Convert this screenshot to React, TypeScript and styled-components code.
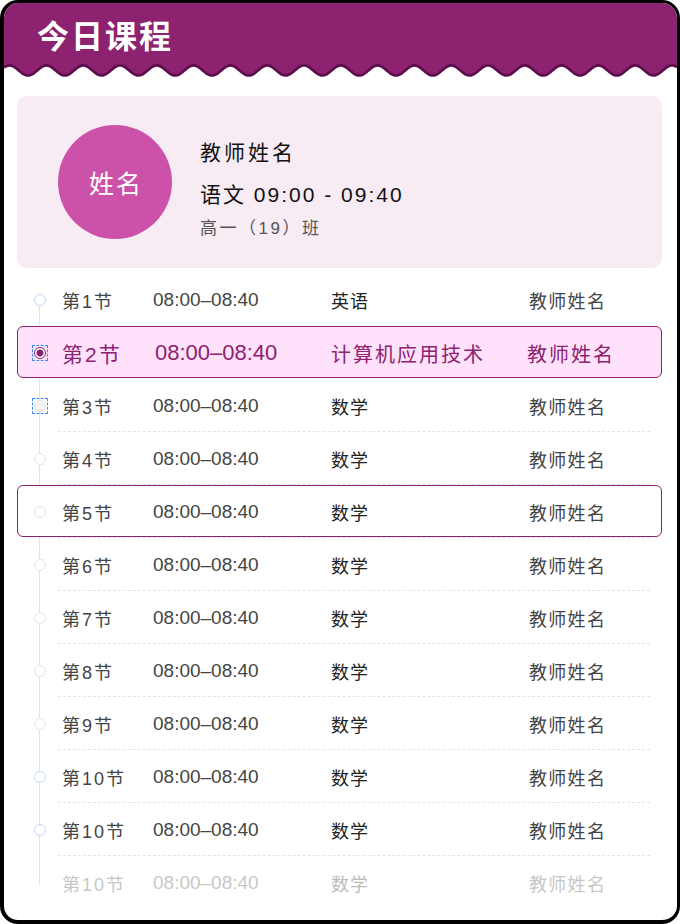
import React from "react";
import styled, { createGlobalStyle } from "styled-components";

const GlobalStyle = createGlobalStyle`
  html, body { margin: 0; padding: 0; background: #fff; overflow: hidden; }
  * { box-sizing: border-box; }
  body { font-family: "Liberation Sans", "Noto Sans CJK SC", sans-serif; }
`;

const PURPLE = "#8c2270";
const DARK = "#5a0c4b";

const Frame = styled.div`
  width: 680px;
  height: 924px;
  border: 3px solid #000;
  border-left-width: 4px;
  border-bottom-width: 4px;
  border-radius: 18px;
  overflow: hidden;
  background: #fff;
  display: flex;
  flex-direction: column;
`;

const Header = styled.header`
  height: 59px;
  background: ${PURPLE};
  display: flex;
  align-items: center;
  padding-left: 33px;
`;

const Title = styled.h1`
  margin: 0;
  color: #fff;
  font-family: "Noto Sans CJK SC", sans-serif;
  font-weight: 700;
  font-size: 32px;
  letter-spacing: 2px;
  line-height: 1;
  padding-top: 2px;
`;

const WaveSvg = styled.svg`
  display: block;
  width: 673px;
  height: 18px;
`;

const Content = styled.main`
  padding: 16px 15px 0 13px;
  flex: 1;
`;

const TeacherCard = styled.section`
  height: 172px;
  background: #f7ebf4;
  border-radius: 10px;
  display: flex;
  align-items: center;
  padding-left: 41px;
  gap: 28px;
`;

const Avatar = styled.div`
  width: 114px;
  height: 114px;
  border-radius: 50%;
  background: #cc52a9;
  color: #fff;
  display: flex;
  align-items: center;
  justify-content: center;
  font-family: "Noto Sans CJK SC", sans-serif;
  font-size: 25px;
  letter-spacing: 2px;
  padding-left: 2px;
`;

const Info = styled.div`
  display: flex;
  flex-direction: column;
  margin-top: 14px;
`;

const Name = styled.div`
  font-family: "Noto Sans CJK SC", sans-serif;
  font-size: 21px;
  line-height: 28px;
  letter-spacing: 3px;
  color: #111;
`;

const Lesson = styled.div`
  margin-top: 16px;
  font-family: "Liberation Sans", "Noto Sans CJK SC", sans-serif;
  font-size: 21px;
  line-height: 28px;
  letter-spacing: 2px;
  color: #111;
`;

const ClassName = styled.div`
  margin-top: 8px;
  font-family: "Liberation Sans", "Noto Sans CJK SC", sans-serif;
  font-size: 17px;
  line-height: 24px;
  letter-spacing: 2.5px;
  color: #555;
`;

const List = styled.div`
  position: relative;
  margin-top: 5px;
`;

const TimelineLine = styled.div`
  position: absolute;
  left: 22px;
  top: 29px;
  bottom: 23px;
  width: 1px;
  background: #e3e3e3;
`;

type RowMode = "plain" | "active" | "outlined";

const Row = styled.div<{ $mode: RowMode; $line: boolean; $faded?: boolean }>`
  position: relative;
  z-index: 1;
  height: 52px;
  margin-bottom: 1px;
  display: grid;
  grid-template-columns: 30px 91px 178px 196px 1fr;
  align-items: center;
  padding: 2px 0 0 14px;
  border: 1px solid ${(p) => (p.$mode === "plain" ? "transparent" : PURPLE)};
  border-radius: 6px;
  background: ${(p) =>
    p.$mode === "active" ? "#ffe1fb" : p.$mode === "outlined" ? "#fff" : "transparent"};
  color: ${(p) => (p.$mode === "active" ? PURPLE : "#444")};
  &::after {
    content: "";
    display: ${(p) => (p.$line ? "block" : "none")};
    position: absolute;
    left: 40px;
    right: 11px;
    bottom: -2px;
    border-top: 1px dashed #e4e4e4;
  }
  & > span:not(:first-child) {
    opacity: ${(p) => (p.$faded ? 0.3 : 1)};
  }
`;

type DotKind = "blue" | "gray" | "active" | "focus";

const DotSlot = styled.span<{ $focus: boolean }>`
  display: flex;
  align-items: center;
  justify-content: center;
  width: 16px;
  height: 16px;
  border: 1px dashed ${(p) => (p.$focus ? "#3d8ff3" : "transparent")};
`;

const Dot = styled.span<{ $kind: DotKind }>`
  display: block;
  flex: none;
  width: 12px;
  height: 12px;
  border-radius: 50%;
  border: ${(p) =>
    p.$kind === "active"
      ? `1.5px solid ${PURPLE}`
      : p.$kind === "blue"
      ? "1px solid #c5d9f6"
      : "1px solid #e4e4e4"};
  background: ${(p) =>
    p.$kind === "active"
      ? `radial-gradient(circle, ${PURPLE} 0 3.2px, #fff 3.8px)`
      : p.$kind === "focus"
      ? "#f3f3f3"
      : "#fff"};
`;

const Index = styled.span<{ $big: boolean }>`
  font-family: "Liberation Sans", "Noto Sans CJK SC", sans-serif;
  font-size: ${(p) => (p.$big ? 21 : 18)}px;
  letter-spacing: 2px;
  white-space: nowrap;
`;

const Time = styled.span<{ $big: boolean }>`
  font-family: "Liberation Sans", sans-serif;
  font-size: ${(p) => (p.$big ? 22 : 19)}px;
  white-space: nowrap;
  padding-left: ${(p) => (p.$big ? 2 : 0)}px;
`;

const Subject = styled.span<{ $big: boolean }>`
  font-family: "Noto Sans CJK SC", sans-serif;
  font-size: ${(p) => (p.$big ? 20 : 18)}px;
  letter-spacing: ${(p) => (p.$big ? 2 : 1)}px;
  color: ${(p) => (p.$big ? "inherit" : "#222")};
  white-space: nowrap;
`;

const Teacher = styled.span<{ $big: boolean }>`
  font-family: "Noto Sans CJK SC", sans-serif;
  font-size: ${(p) => (p.$big ? 20 : 18)}px;
  letter-spacing: ${(p) => (p.$big ? 2 : 1.3)}px;
  white-space: nowrap;
  padding-left: ${(p) => (p.$big ? 0 : 2)}px;
`;

type Lesson = {
  idx: string;
  subject: string;
  mode: RowMode;
  dot: DotKind;
  line: boolean;
  faded?: boolean;
};

const lessons: Lesson[] = [
  { idx: "第1节", subject: "英语", mode: "plain", dot: "blue", line: false },
  { idx: "第2节", subject: "计算机应用技术", mode: "active", dot: "active", line: false },
  { idx: "第3节", subject: "数学", mode: "plain", dot: "focus", line: true },
  { idx: "第4节", subject: "数学", mode: "plain", dot: "gray", line: true },
  { idx: "第5节", subject: "数学", mode: "outlined", dot: "gray", line: true },
  { idx: "第6节", subject: "数学", mode: "plain", dot: "gray", line: true },
  { idx: "第7节", subject: "数学", mode: "plain", dot: "gray", line: true },
  { idx: "第8节", subject: "数学", mode: "plain", dot: "gray", line: true },
  { idx: "第9节", subject: "数学", mode: "plain", dot: "gray", line: true },
  { idx: "第10节", subject: "数学", mode: "plain", dot: "blue", line: true },
  { idx: "第10节", subject: "数学", mode: "plain", dot: "blue", line: true },
  { idx: "第10节", subject: "数学", mode: "plain", dot: "blue", line: false, faded: true },
];

function Wave() {
  const W = 673;
  const pts: string[] = [];
  for (let x = 0; x <= W; x += 1) {
    const y = 8.5 + 5 * Math.cos((2 * Math.PI * (x - 24)) / 36.8);
    pts.push(`${x},${y.toFixed(2)}`);
  }
  return (
    <WaveSvg viewBox={`0 0 ${W} 18`} preserveAspectRatio="none">
      <path d={`M0,0 L${pts.join(" L")} L${W},0 Z`} fill={PURPLE} />
      <path d={"M" + pts.join(" L")} fill="none" stroke={DARK} strokeWidth={2.6} />
    </WaveSvg>
  );
}

export default function App() {
  return (
    <>
      <GlobalStyle />
      <Frame>
        <Header>
          <Title>今日课程</Title>
        </Header>
        <Wave />
        <Content>
          <TeacherCard>
            <Avatar>姓名</Avatar>
            <Info>
              <Name>教师姓名</Name>
              <Lesson>语文 09:00 - 09:40</Lesson>
              <ClassName>高一（19）班</ClassName>
            </Info>
          </TeacherCard>
          <List>
            <TimelineLine />
            {lessons.map((l, i) => {
              const big = l.mode === "active";
              return (
                <Row key={i} $mode={l.mode} $line={l.line} $faded={l.faded}>
                  <DotSlot $focus={l.dot === "focus" || l.dot === "active"}>
                    {!l.faded && <Dot $kind={l.dot} />}
                  </DotSlot>
                  <Index $big={big}>{l.idx}</Index>
                  <Time $big={big}>08:00–08:40</Time>
                  <Subject $big={big}>{l.subject}</Subject>
                  <Teacher $big={big}>教师姓名</Teacher>
                </Row>
              );
            })}
          </List>
        </Content>
      </Frame>
    </>
  );
}
